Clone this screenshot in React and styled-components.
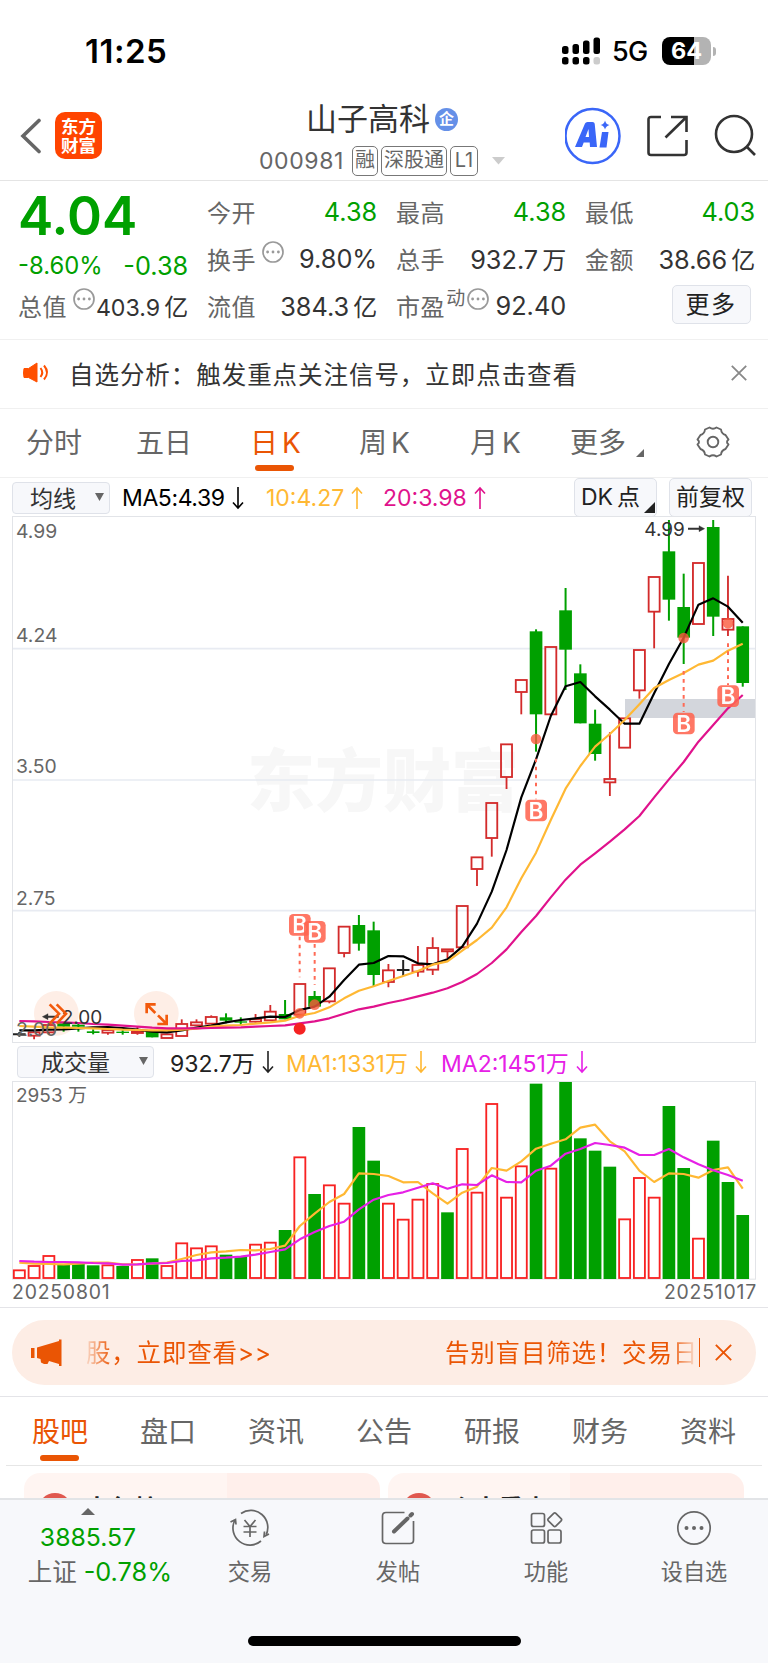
import React from 'react';
import styled, { createGlobalStyle } from 'styled-components';

const GREEN = '#00a000';
const RED = '#d32b2b';
const ORANGE = '#ea5504';

const GlobalStyle = createGlobalStyle`
  * {
    box-sizing: border-box;
  }
  body {
    margin: 0;
    background: #fff;
    color: #333;
    font-family: Inter, 'Noto Sans CJK SC', sans-serif;
    font-weight: 390;
    white-space: nowrap;
  }
  svg {
    display: block;
    flex: none;
  }
`

const Page = styled.div`
  display: flex;
  flex-direction: column;
  width: 768px;
  height: 1663px;
  overflow: hidden;
`

/* status bar */

const StatusBar = styled.div`
  display: flex;
  align-items: center;
  height: 102px;
  flex: none;
  padding: 0 52px 0 85px;
  color: #000;
`
const Time = styled.div`
  flex: 1;
  font-size: 33px;
  font-weight: 600;
  letter-spacing: 0.5px;
`
const Network = styled.div`
  width: 61px;
  flex: none;
  padding-left: 11px;
  font-size: 27px;
  font-weight: 500;
  letter-spacing: -0.6px;
`
const Battery = styled.div`
  width: 49px;
  height: 28px;
  border-radius: 8px;
  background: linear-gradient(90deg, #000 65%, #b3b3b3 65%);
  color: #fff;
  font-size: 23.5px;
  font-weight: 700;
  line-height: 28px;
  text-align: center;
`
const BatteryCap = styled.div`
  width: 3px;
  height: 9px;
  margin-left: 2px;
  border-radius: 0 4px 4px 0;
  background: #b3b3b3;
`

/* header */

const Header = styled.div`
  display: flex;
  height: 79px;
  flex: none;
  border-bottom: 1px solid #e4e4e4;
`
const HeaderLeft = styled.div`
  display: flex;
  width: 220px;
  padding: 10px 0 0 20px;
  gap: 14px;
`
const Logo = styled.div`
  display: flex;
  flex-direction: column;
  justify-content: center;
  width: 47px;
  height: 47px;
  border-radius: 10px;
  background: #ff4400;
  color: #fff;
  font-size: 17.5px;
  font-weight: 700;
  line-height: 19px;
  text-align: center;
`
const HeaderTitle = styled.div`
  display: flex;
  flex-direction: column;
  align-items: center;
  width: 324px;
`
const Name = styled.div`
  display: flex;
  align-items: center;
  height: 35px;
  font-size: 31px;
  gap: 5px;
`
const NameText = styled.span`
  line-height: 36px;
  padding-bottom: 1px;
`
const Badge = styled.span`
  width: 23px;
  height: 23px;
  border-radius: 50%;
  background: #6590e8;
  color: #fff;
  font-size: 15px;
  font-weight: 700;
  line-height: 22px;
  text-align: center;
`
const Code = styled.div`
  display: flex;
  align-items: center;
  height: 30px;
  margin-top: 9px;
  color: #666;
  font-size: 23px;
  gap: 3px;
`
const CodeNumber = styled.span`
  margin-right: 5px;
  letter-spacing: 0.6px;
`
const Tag = styled.span`
  min-width: ${p => p.$width || 26}px;
  height: 30px;
  padding: 0 1px;
  border: 1.4px solid #777;
  border-radius: 5px;
  font-size: 20px;
  line-height: 27px;
  text-align: center;
`
const HeaderRight = styled.div`
  display: flex;
  padding: 5px 0 0 21px;
`
const Ai = styled.div`
  width: 56px;
  height: 58px;
  margin-right: 25px;
`

/* quote */

const Quote = styled.div`
  display: grid;
  grid-template-columns: repeat(4, 169.5px);
  grid-template-rows: repeat(3, 47px);
  column-gap: 19.5px;
  height: 159px;
  flex: none;
  padding: 7px 12px 0 18px;
  border-bottom: 1px solid #f0f0f0;
`
const Cell = styled.div`
  display: flex;
  align-items: center;
  justify-content: space-between;
  padding-top: ${p => p.$top || 0}px;
`
const Price = styled.div`
  color: ${GREEN};
  font-size: 53px;
  font-weight: 600;
  line-height: 50px;
`
const Label = styled.span`
  display: flex;
  color: #666;
  font-size: 24px;
  letter-spacing: 0.6px;
  gap: ${p => p.$gap}px;
`
const Value = styled.span`
  margin-right: -0.7px;
  color: ${p => p.$color || '#333'};
  font-size: ${p => p.$size || 25.3}px;
`
const Unit = styled.span`
  margin-left: 4px;
  font-size: 24px;
`
const Dynamic = styled.span`
  margin: -5px 0 0 0;
  font-size: 19px;
`
const MoreButton = styled.div`
  width: 79px;
  height: 39px;
  margin: 3px 4px 0 auto;
  border: 1.5px solid #dfe2e9;
  border-radius: 5px;
  background: #f7f8fb;
  color: #222;
  font-size: 24px;
  line-height: 37px;
  letter-spacing: 1.5px;
  text-align: center;
`

/* notice */

const Notice = styled.div`
  display: flex;
  align-items: center;
  height: 69px;
  flex: none;
  padding: 0 21px 2px 22px;
  border-bottom: 1px solid #f0f0f0;
`
const NoticeText = styled.div`
  flex: 1;
  margin-left: 17px;
  font-size: 24.5px;
  letter-spacing: 0.95px;
`

/* tabs */

const Tabs = styled.div`
  display: flex;
  height: 69px;
  flex: none;
  margin: ${p => (p.$inset ? '0 6px' : '0')};
  padding-left: ${p => (p.$inset ? 26 : 26)}px;
  border-bottom: 1px solid ${p => (p.$inset ? '#e6e6e6' : '#f0f0f0')};
`
const Tab = styled.div`
  width: ${p => p.$width || 108}px;
  flex: none;
  padding-top: ${p => p.$top || 14}px;
  color: ${p => (p.$active ? ORANGE : '#666')};
  font-size: 28px;
  line-height: 40px;
`
const TabLabel = styled.div`
  display: flex;
  gap: 4px;
`
const Underline = styled.div`
  width: 39px;
  height: 6px;
  margin: ${p => p.$margin};
  border-radius: 3px;
  background: ${ORANGE};
`
const Corner = styled.span`
  align-self: flex-end;
  width: 0;
  height: 0;
  margin: 0 0 ${p => p.$bottom}px ${p => p.$left}px;
  border-left: ${p => p.$size}px solid transparent;
  border-bottom: ${p => p.$size}px solid ${p => p.$color};
`

/* indicator rows */

const Indicators = styled.div`
  display: flex;
  align-items: center;
  height: ${p => p.$height}px;
  flex: none;
  padding: ${p => p.$top || 0}px 16px 0 ${p => p.$left}px;
`
const Select = styled.div`
  display: flex;
  align-items: center;
  justify-content: space-between;
  width: ${p => p.$width}px;
  height: 32px;
  margin-right: ${p => p.$gap}px;
  padding: 0 5px 2px ${p => p.$pad}px;
  border: 1.5px solid #dfe2e9;
  border-radius: 4px;
  background: #f7f8fb;
  font-size: 23px;
`
const Average = styled.div`
  display: flex;
  align-items: center;
  width: ${p => p.$width}px;
  color: ${p => p.$color};
  font-size: 23px;
  letter-spacing: ${p => p.$spacing || 0}px;
  gap: 7px;
`
const Square = styled.div`
  display: flex;
  width: 83px;
  height: 39px;
  margin-left: ${p => p.$left};
  padding-left: 6px;
  border: 1.5px solid #dfe2e9;
  border-radius: 5px;
  background: #f7f8fb;
  color: #222;
  font-size: 23px;
  line-height: 36px;
  gap: 4px;
`

const Dates = styled.div`
  display: flex;
  justify-content: space-between;
  height: 28px;
  flex: none;
  padding: 0 11px 0 12px;
  border-bottom: 1px solid #e4e4e8;
  color: #666;
  font-size: 19.4px;
  line-height: 24px;
  letter-spacing: 0.8px;
`

/* promo */

const Promo = styled.div`
  height: 89px;
  flex: none;
  padding: 12px 12px 0;
  border-bottom: 1px solid #e4e4e8;
`
const Pill = styled.div`
  display: flex;
  align-items: center;
  height: 65px;
  padding: 0 24px 0 19px;
  border-radius: 33px;
  background: #fdede5;
  color: ${ORANGE};
  font-size: 24.5px;
`
const Marquee = styled.div`
  display: flex;
  justify-content: space-between;
  width: 617px;
  margin-left: 20px;
  padding: 0 1px 3px 4px;
  overflow: hidden;
  letter-spacing: 0.8px;
  mask-image: linear-gradient(90deg, transparent, #000 30px, #000 588px, transparent);
`
const Divider = styled.div`
  width: 1px;
  height: 29px;
  margin-right: 15px;
  background: ${ORANGE};
`

/* cards */

const Cards = styled.div`
  display: flex;
  height: 32px;
  flex: none;
  padding: 7px 24px 0;
  gap: 8px;
  overflow: hidden;
`
const Card = styled.div`
  display: flex;
  width: 356px;
  height: 90px;
  padding: 20px 0 0 14px;
  border-radius: 16px;
  background: linear-gradient(90deg, #fff5f2 ${p => p.$split}, #ffefeb ${p => p.$split});
  color: #222;
  font-size: 24px;
  font-weight: 700;
  line-height: 36px;
  gap: 13px;
`
const CardTitle = styled.div`
  margin-top: -2px;
  letter-spacing: 1px;
`
const Dot = styled.div`
  width: 34px;
  height: 34px;
  border-radius: 50%;
  background: #e0584f;
`

/* bottom bar */

const BottomBar = styled.div`
  display: flex;
  flex-wrap: wrap;
  align-content: flex-start;
  height: 166px;
  flex: none;
  border-top: 2px solid #e2e4e7;
  background: #f7f8fb;
`
const Index = styled.div`
  display: flex;
  flex-direction: column;
  align-items: center;
  width: 176px;
  height: 130px;
  padding-top: 8px;
`
const IndexPrice = styled.div`
  margin-top: 5px;
  color: ${GREEN};
  font-size: 24.8px;
  line-height: 34px;
`
const IndexChange = styled.div`
  display: flex;
  margin: 0 0 0 23px;
  color: #666;
  font-size: 24.5px;
  line-height: 36px;
  gap: 7px;
`
const Action = styled.div`
  display: flex;
  flex-direction: column;
  align-items: center;
  width: 148px;
  height: 130px;
  padding-top: 8px;
  color: #666;
  font-size: 22.2px;
  line-height: 32px;
  gap: 8px;
`
const HomeIndicator = styled.div`
  width: 273px;
  height: 10px;
  margin: 6px auto 0;
  border-radius: 5px;
  background: #000;
`

const More = () => (
  <svg width="22" height="22" viewBox="0 0 22 22" fill="none" stroke="#999">
    <circle cx="11" cy="11" r="10" strokeWidth="1.7" />
    <path d="M5.6 11h.01M11 11h.01M16.4 11h.01" strokeWidth="2.8" strokeLinecap="round" />
  </svg>
)

const Close = ({ color, size = 16 }) => (
  <svg width={size} height={size} viewBox="0 0 16 16" stroke={color} strokeWidth="1.8">
    <path d="M.8.8l14.4 14.4M15.2.8L.8 15.2" />
  </svg>
)

const Arrow = ({ up }) => (
  <svg width="12" height="24" viewBox="0 0 12 24" fill="none" stroke="currentColor" strokeWidth="1.6">
    <path d={up ? 'M6 23V2M1 7.5l5-5.5 5 5.5' : 'M6 1v21M1 16.5L6 22l5-5.5'} />
  </svg>
)

const Caret = () => (
  <svg width="9" height="8" viewBox="0 0 9 8" fill="#666">
    <path d="M0 0h9L4.500 8z" />
  </svg>
)

/* candles: [kind, high, top, bottom, low] in thirds of a pixel from the top of the plot */
const candles = [
  ['k', 1548, 1555, 1555, 1562], ['r', 1544, 1548, 1560, 1570], ['r', 1522, 1526, 1550, 1554],
  ['g', 1518, 1522, 1532, 1547], ['g', 1518, 1526, 1532, 1547], ['g', 1540, 1546, 1551, 1555],
  ['r', 1537, 1541, 1551, 1556], ['g', 1542, 1547, 1551, 1556], ['r', 1532, 1545, 1552, 1556],
  ['g', 1546, 1546, 1564, 1564], ['r', 1554, 1554, 1567, 1567], ['r', 1510, 1523, 1561, 1561],
  ['r', 1510, 1518, 1529, 1529], ['r', 1498, 1502, 1524, 1524], ['g', 1492, 1504, 1514, 1522],
  ['g', 1504, 1516, 1520, 1527], ['r', 1494, 1508, 1518, 1520], ['r', 1467, 1486, 1514, 1514],
  ['g', 1452, 1494, 1510, 1510], ['r', 1403, 1403, 1497, 1497], ['g', 1425, 1440, 1472, 1472],
  ['r', 1356, 1356, 1457, 1462], ['r', 1231, 1231, 1312, 1324], ['g', 1197, 1227, 1283, 1304],
  ['g', 1217, 1243, 1377, 1412], ['r', 1344, 1362, 1399, 1414], ['k', 1332, 1362, 1362, 1380],
  ['r', 1290, 1346, 1368, 1382], ['r', 1264, 1295, 1362, 1377], ['r', 1299, 1299, 1307, 1327],
  ['r', 1169, 1169, 1295, 1295], ['r', 1023, 1023, 1060, 1110], ['r', 860, 860, 967, 1022],
  ['r', 684, 684, 784, 819], ['r', 491, 491, 529, 595], ['g', 340, 346, 595, 707],
  ['r', 392, 392, 596, 596], ['g', 216, 283, 401, 522], ['g', 445, 472, 622, 622],
  ['g', 581, 623, 714, 734], ['r', 649, 788, 800, 840], ['r', 606, 606, 696, 696],
  ['r', 401, 401, 524, 548], ['r', 182, 182, 288, 397], ['g', 12, 106, 251, 314],
  ['g', 173, 273, 365, 444], ['r', 140, 140, 325, 325], ['g', 12, 33, 302, 360],
  ['r', 179, 308, 342, 360], ['g', 331, 331, 501, 512],
]

const ma5 = [1543, 1543, 1541, 1540, 1537, 1534, 1533, 1536, 1541, 1547, 1549, 1543, 1535, 1529, 1519, 1512, 1507, 1502, 1503, 1482, 1472, 1442, 1392, 1346, 1341, 1320, 1321, 1342, 1345, 1330, 1292, 1223, 1127, 1002, 844, 730, 600, 511, 498, 541, 581, 623, 623, 532, 444, 365, 266, 247, 272, 320]
const ma10 = [1530, 1532, 1534, 1535, 1536, 1537, 1539, 1541, 1542, 1543, 1543, 1541, 1538, 1532, 1529, 1527, 1523, 1519, 1514, 1499, 1491, 1474, 1447, 1424, 1411, 1395, 1380, 1365, 1346, 1336, 1304, 1272, 1235, 1174, 1087, 1010, 912, 818, 750, 692, 654, 612, 565, 516, 492, 471, 446, 434, 404, 383]
const ma20 = [1515, 1516, 1518, 1519, 1521, 1524, 1526, 1529, 1532, 1535, 1537, 1537, 1537, 1536, 1535, 1534, 1532, 1530, 1528, 1522, 1516, 1507, 1493, 1480, 1472, 1461, 1452, 1441, 1430, 1417, 1398, 1374, 1341, 1300, 1248, 1200, 1144, 1091, 1046, 1012, 977, 940, 900, 844, 790, 738, 677, 627, 577, 537]

const volumes = [570, 557, 527, 555, 552, 556, 555, 558, 539, 535, 557, 489, 504, 498, 524, 530, 493, 487, 450, 231, 342, 315, 370, 141, 242, 370, 418, 358, 311, 397, 206, 337, 71, 352, 258, 11, 265, 6, 175, 212, 260, 417, 293, 352, 78, 264, 475, 182, 306, 405]
const volumeUp = 'rrrgggrgrgrrrrggrrgrgrrggrrrrgrrrrrgrggggrrrggrggg'
const volMa1 = [548, 551, 552, 553, 551, 548, 548, 553, 553, 551, 548, 537, 525, 517, 514, 510, 511, 507, 497, 438, 401, 366, 342, 280, 282, 288, 307, 306, 340, 371, 338, 320, 264, 272, 244, 206, 191, 178, 143, 134, 184, 214, 272, 306, 280, 282, 293, 270, 262, 326]
const volMa2 = [543, 545, 546, 546, 547, 549, 550, 554, 553, 550, 549, 543, 541, 535, 533, 530, 524, 516, 508, 478, 456, 438, 425, 388, 359, 345, 337, 323, 310, 326, 313, 315, 286, 306, 307, 272, 257, 221, 207, 189, 195, 203, 225, 225, 207, 232, 253, 271, 285, 302]

/* signals: marker y, dot y, dashed line start and end */
const signals = [
  { x: 863, y: 1227, dot: 1492, from: 1262, to: 1384 },
  { x: 908, y: 1248, dot: 1466, from: 1284, to: 1406 },
  { x: 1572, y: 884, dot: 669, from: 728, to: 850 },
  { x: 2015, y: 623, dot: 366, from: 465, to: 588 },
  { x: 2148, y: 541, dot: 322, from: 382, to: 507 },
]

const xOf = i => 22 + i * 44.29
const line = values => values.map((y, i) => `${xOf(i).toFixed(1)},${y}`).join(' ')

const Candle = ({ i, data }) => {
  const [kind, high, top, bottom, low] = data
  const x = xOf(i)
  if (kind === 'k') {
    return <path d={`M${x - 19} ${top}h38M${x} ${high}V${low}`} stroke="#222" strokeWidth="6" />
  }
  if (kind === 'g') {
    return (
      <g fill={GREEN}>
        <rect x={x - 3} y={high} width="6" height={low - high} />
        <rect x={x - 19} y={top} width="38" height={bottom - top} />
      </g>
    )
  }
  return (
    <g stroke={RED} strokeWidth="5.5" fill="none">
      <path d={`M${x} ${high}V${top}M${x} ${bottom}V${low}`} />
      <rect x={x - 16.5} y={top + 1} width="33" height={Math.max(bottom - top - 2, 2)} />
    </g>
  )
}

const Plot = styled.svg`
  margin: 0 12px;
`

const PriceChart = () => (
  <Plot width="744" height="528" viewBox="0 0 2232 1584">
    <text x="705" y="870" fontSize="204" fontWeight="900" fill="#f7f7f7">东方财富</text>
    <path d="M0 398h2230M0 792h2230M0 1184h2230" stroke="#e8ebf2" strokeWidth="5" />
    <rect x="1.500" y="1.500" width="2229" height="1578" fill="none" stroke="#e2e4e8" strokeWidth="3" />
    <rect x="1839" y="549" width="390" height="57" fill="#d3d6dc" />
    <circle cx="133" cy="1492" r="67" fill="#feeee6" />
    <circle cx="433" cy="1492" r="67" fill="#feeee6" />
    {candles.map((c, i) => <Candle key={i} i={i} data={c} />)}
    <g fill="none" strokeWidth="6.5" strokeLinejoin="round">
      <polyline points={line(ma5)} stroke="#000" />
      <polyline points={line(ma10)} stroke="#ffb833" />
      <polyline points={line(ma20)} stroke="#e0128c" />
    </g>
    {signals.map(s => (
      <g key={s.x}>
        <path d={`M${s.x} ${s.from}V${s.to}`} stroke="#ff6a55" strokeWidth="6" strokeDasharray="11 13" />
        <circle cx={s.x} cy={s.dot} r="16" fill="#fa5a3c" fillOpacity="0.8" />
        <g opacity="0.88">
          <rect x={s.x - 32} y={s.y - 33} width="65" height="65" rx="13" fill="#ff6550" />
          <text x={s.x} y={s.y + 24} textAnchor="middle" fontSize="68" fontWeight="600" fill="#fff">B</text>
        </g>
      </g>
    ))}
    <circle cx="863" cy="1538" r="18" fill="#f52222" />
    <g fontSize="58" fill="#666">
      <text x="12" y="65">4.99</text>
      <text x="12" y="377">4.24</text>
      <text x="12" y="771">3.50</text>
      <text x="12" y="1167">2.75</text>
      <text x="12" y="1559">2.00</text>
    </g>
    <g fontSize="57" fontWeight="430" fill="#333">
      <text x="1897" y="60">4.99</text>
      <text x="149" y="1523">2.00</text>
    </g>
    <g stroke="#333" strokeWidth="6" fill="#333">
      <path d="M2028 38h40M140 1502h-36" />
      <path d="M2078 38l-17-9v18zM91 1502l17-9v18z" strokeWidth="1" />
    </g>
    <g fill="none" stroke="#f25a0c" strokeWidth="8">
      <path d="M113 1465l28 28-28 30M134 1465l28 28-28 30" />
      <path d="M404 1492v-27h27M406 1467l24 24M436 1524h28v-28M462 1522l-24-24" />
    </g>
  </Plot>
)

const VolumeChart = () => (
  <Plot width="744" height="200" viewBox="0 0 2232 600">
    <rect x="1.500" y="4.500" width="2229" height="593" fill="none" stroke="#e2e4e8" strokeWidth="3" />
    {volumes.map((y, i) => (
      volumeUp[i] === 'g'
        ? <rect key={i} x={xOf(i) - 19} y={y} width="38" height={597 - y} fill={GREEN} />
        : <rect key={i} x={xOf(i) - 16.5} y={y + 1} width="33" height={593 - y} fill="#fff" stroke="#f82222" strokeWidth="5.500" />
    ))}
    <g fill="none" strokeWidth="6.5" strokeLinejoin="round">
      <polyline points={line(volMa1)} stroke="#ffb833" />
      <polyline points={line(volMa2)} stroke="#e620e6" />
    </g>
    <text x="12" y="65" fontSize="57" fill="#666">2953 万</text>
  </Plot>
)

const Signal = () => (
  <svg width="40" height="28" viewBox="0 0 40 28">
    <rect x="1" y="9" width="6.500" height="8" rx="2.500" />
    <rect x="11.500" y="7" width="6.500" height="10" rx="2.500" />
    <rect x="22" y="3.500" width="6.500" height="13.500" rx="2.500" />
    <rect x="32.500" y=".5" width="6.500" height="16.500" rx="2.500" />
    <rect x="1" y="20" width="6.500" height="7.500" rx="2.500" />
    <rect x="11.500" y="20" width="6.500" height="7.500" rx="2.500" />
    <rect x="22" y="20" width="6.500" height="7.500" rx="2.500" />
    <rect x="32.500" y="20" width="6.500" height="7.500" rx="2.500" fill="#ccc" />
  </svg>
)

const Stat = ({ label, value, unit, color, more, dynamic, size }) => (
  <Cell>
    <Label $gap={dynamic ? 1 : 6}>
      {label}
      {dynamic && <Dynamic>动</Dynamic>}
      {more && <More />}
    </Label>
    <Value $color={color} $size={size}>
      {value}
      {unit && <Unit>{unit}</Unit>}
    </Value>
  </Cell>
)

const App = () => (
  <Page>
    <GlobalStyle />
    <StatusBar>
      <Time>11:25</Time>
      <Signal />
      <Network>5G</Network>
      <Battery>64</Battery>
      <BatteryCap />
    </StatusBar>

    <Header>
      <HeaderLeft>
        <svg width="21" height="47" viewBox="0 0 21 47" fill="none" stroke="#666" strokeWidth="3.600">
          <path d="M19 8.500L3 24l16 15.500" strokeLinecap="round" />
        </svg>
        <Logo><span>东方</span><span>财富</span></Logo>
      </HeaderLeft>
      <HeaderTitle>
        <Name><NameText>山子高科</NameText><Badge>企</Badge></Name>
        <Code>
          <CodeNumber>000981</CodeNumber>
          <Tag>融</Tag>
          <Tag $width={66}>深股通</Tag>
          <Tag $width={28}>L1</Tag>
          <svg width="24" height="8" viewBox="-2 0 24 8" fill="#ccc"><path d="M9 0h13l-6.500 7.500z" /></svg>
        </Code>
      </HeaderTitle>
      <HeaderRight>
        <Ai>
          <svg width="58" height="58" viewBox="0 0 58 58">
            <circle cx="27.500" cy="29" r="27" fill="#fff" stroke="#3a66f8" strokeWidth="2.500" />
            <path d="M10 40L20 16.500q.7-1.500 2.500-1.500h5q2 0 2.200 1.800L32 40h-7l-.3-4.500h-6L17 40zM20.500 30h3.500L23.500 22z" fill="#3a66f8" fillRule="evenodd" />
            <path d="M37 25h6.500l-2 15.500h-7zM40 13.500q1 4 4.500 4.500-3.700 1-4.500 4.500-1-3.700-4.500-4.500 3.700-.8 4.500-4.500z" fill="#3a66f8" />
          </svg>
        </Ai>
        <svg width="42" height="58" viewBox="0 0 42 58" fill="none" stroke="#333" strokeWidth="2.600">
          <path d="M15 10H5q-2.500 0-2.500 2.500v33Q2.500 48 5 48h33q2.500 0 2.500-2.500V33M25 10h15.500v15M40 10.500L19.500 30.500" />
        </svg>
        <svg width="70" height="58" viewBox="-25 0 70 58" fill="none" stroke="#333" strokeWidth="2.600">
          <circle cx="21" cy="27" r="18" />
          <path d="M33.500 39.500l8.500 8.500" />
        </svg>
      </HeaderRight>
    </Header>

    <Quote>
      <Cell $top={8}><Price>4.04</Price></Cell>
      <Stat label="今开" value="4.38" color={GREEN} />
      <Stat label="最高" value="4.38" color={GREEN} />
      <Stat label="最低" value="4.03" color={GREEN} />
      <Cell $top={13}>
        <Value $color={GREEN} $size={23.8}>-8.60%</Value>
        <Value $color={GREEN} $size={25.3}>-0.38</Value>
      </Cell>
      <Stat label="换手" value="9.80%" more />
      <Stat label="总手" value="932.7" unit="万" />
      <Stat label="金额" value="38.66" unit="亿" />
      <Stat label="总值" value="403.9" unit="亿" more size={23.2} />
      <Stat label="流值" value="384.3" unit="亿" />
      <Stat label="市盈" value="92.40" dynamic more />
      <MoreButton>更多</MoreButton>
    </Quote>

    <Notice>
      <svg width="30" height="22" viewBox="0 0 30 22" fill="none" stroke="#ff5000" strokeWidth="2">
        <path d="M2 6.500h4.500L15 1v19l-8.500-4.500H2q-1-4.500 0-9z" fill="#ff5000" strokeWidth="1" />
        <path d="M18.500 6q3.500 4.500 0 9M22 3.500q6 7 0 14" />
      </svg>
      <NoticeText>自选分析：触发重点关注信号，立即点击查看</NoticeText>
      <Close color="#888" />
    </Notice>

    <Tabs>
      <Tab $width={110}>分时</Tab>
      <Tab $width={114}>五日</Tab>
      <Tab $width={109} $active>
        <TabLabel>日<span>K</span></TabLabel>
        <Underline $margin="2px 0 0 5px" />
      </Tab>
      <Tab $width={111}><TabLabel>周<span>K</span></TabLabel></Tab>
      <Tab $width={100}><TabLabel>月<span>K</span></TabLabel></Tab>
      <Tab $width={126}>
        <TabLabel>更多<Corner $size={8} $left={6} $bottom={6} $color="#666" /></TabLabel>
      </Tab>
      <svg width="34" height="66" viewBox="-17 -33 34 66" fill="none" stroke="#666" strokeWidth="1.900" strokeLinejoin="round">
        <circle r="5.300" />
        <path d="M-3.500-14.500Q0-12 3.500-14.500L8-12.500Q8.500-8.200 12.500-7L15.500-2.500Q12.500 0 15.500 2.500L12.500 7Q8.500 8.200 8 12.500L3.500 14.500Q0 12-3.500 14.500L-8 12.500Q-8.500 8.200-12.500 7L-15.500 2.500Q-12.500 0-15.500-2.500L-12.500-7Q-8.500-8.200-8-12.500z" />
      </svg>
    </Tabs>

    <Indicators $height={38} $left={12} $top={1}>
      <Select $width={98} $pad={17} $gap={12}>均线<Caret /></Select>
      <Average $color="#000" $width={144} $spacing={-0.4}>MA5:4.39<Arrow /></Average>
      <Average $color="#ffb833" $width={117}>10:4.27<Arrow up /></Average>
      <Average $color="#e0128c" $width={120}>20:3.98<Arrow up /></Average>
      <Square $left="auto">DK<span>点</span><Corner $size={11} $left={0} $bottom={3} $color="#222" /></Square>
      <Square $left="12px">前复权</Square>
    </Indicators>
    <PriceChart />

    <Indicators $height={36} $left={17}>
      <Select $width={137} $pad={23} $gap={16}>成交量<Caret /></Select>
      <Average $color="#222" $width={116}>932.7万<Arrow /></Average>
      <Average $color="#ffb833" $width={155}>MA1:1331万<Arrow /></Average>
      <Average $color="#e620e6" $width={160}>MA2:1451万<Arrow /></Average>
    </Indicators>
    <VolumeChart />
    <Dates><span>20250801</span><span>20251017</span></Dates>

    <Promo>
      <Pill>
        <svg width="31" height="27" viewBox="0 0 31 27" fill={ORANGE}>
          <path d="M0 9h3.500v10H0zM6 8.500L28 2V.5h2.500V27H28v-2l-10-3-1.500 3H13l-3-1.500L9.500 20 6 19z" />
        </svg>
        <Marquee>
          <span>股，立即查看&gt;&gt;</span>
          <span>告别盲目筛选！交易日</span>
        </Marquee>
        <Divider />
        <Close color={ORANGE} size={17} />
      </Pill>
    </Promo>

    <Tabs $inset>
      <Tab $top={15} $active>
        股吧
        <Underline $margin="3px 0 0 8px" />
      </Tab>
      <Tab $top={15}>盘口</Tab>
      <Tab $top={15}>资讯</Tab>
      <Tab $top={15}>公告</Tab>
      <Tab $top={15}>研报</Tab>
      <Tab $top={15}>财务</Tab>
      <Tab $top={15}>资料</Tab>
    </Tabs>
    <Cards>
      <Card $split="57%"><Dot /><CardTitle>大包控</CardTitle></Card>
      <Card $split="51%"><Dot /><CardTitle>个大看点</CardTitle></Card>
    </Cards>

    <BottomBar>
      <Index>
        <svg width="14" height="7" viewBox="0 0 14 7" fill="#666"><path d="M0 7h14L7 0z" /></svg>
        <IndexPrice>3885.57</IndexPrice>
        <IndexChange>上证<Value $color={GREEN}>-0.78%</Value></IndexChange>
      </Index>
      <Action>
        <svg width="40" height="40" viewBox="-20 -20 40 40" fill="none" stroke="#666" strokeWidth="1.700">
          <path d="M-9-14.500A17 17 0 0 1 16 7M11 13A17 17 0 0 1-15.500-7M-19.500-6l5-2.500 .5 5M19 6l-5 2.500 .5-5" />
          <path d="M-5.500-8L0-1.500 5.500-8M0-1.500V9M-6.500-1.500h13M-6.500 4h13" />
        </svg>
        交易
      </Action>
      <Action>
        <svg width="36" height="40" viewBox="-18 -20 36 40" fill="none" stroke="#666" strokeWidth="1.700">
          <path d="M6.500-15.500H-12Q-15.500-15.500-15.500-12V12Q-15.500 15.500-12 15.500H12Q15.500 15.500 15.500 12V-7" />
          <path d="M-4 3.500L9.500-9.500M12.500-12.500l1.500-1.500" strokeWidth="4" strokeLinecap="round" />
        </svg>
        发帖
      </Action>
      <Action>
        <svg width="36" height="40" viewBox="-18 -20 36 40" fill="none" stroke="#666" strokeWidth="1.700">
          <rect x="-14.500" y="-14.500" width="13" height="13" rx="2" />
          <rect x="-14.500" y="2" width="13" height="13" rx="2" />
          <rect x="2" y="2" width="13" height="13" rx="2" />
          <rect x="3.500" y="-13.500" width="10.500" height="10.500" rx="1.500" transform="rotate(45 8.750 -8.250)" />
        </svg>
        功能
      </Action>
      <Action>
        <svg width="36" height="40" viewBox="-18 -20 36 40" fill="none" stroke="#666" strokeWidth="1.700">
          <circle r="16.200" />
          <path d="M-7.500 0h.01M0 0h.01M7.500 0h.01" strokeWidth="4" strokeLinecap="round" />
        </svg>
        设自选
      </Action>
      <HomeIndicator />
    </BottomBar>
  </Page>
)

export default App;
